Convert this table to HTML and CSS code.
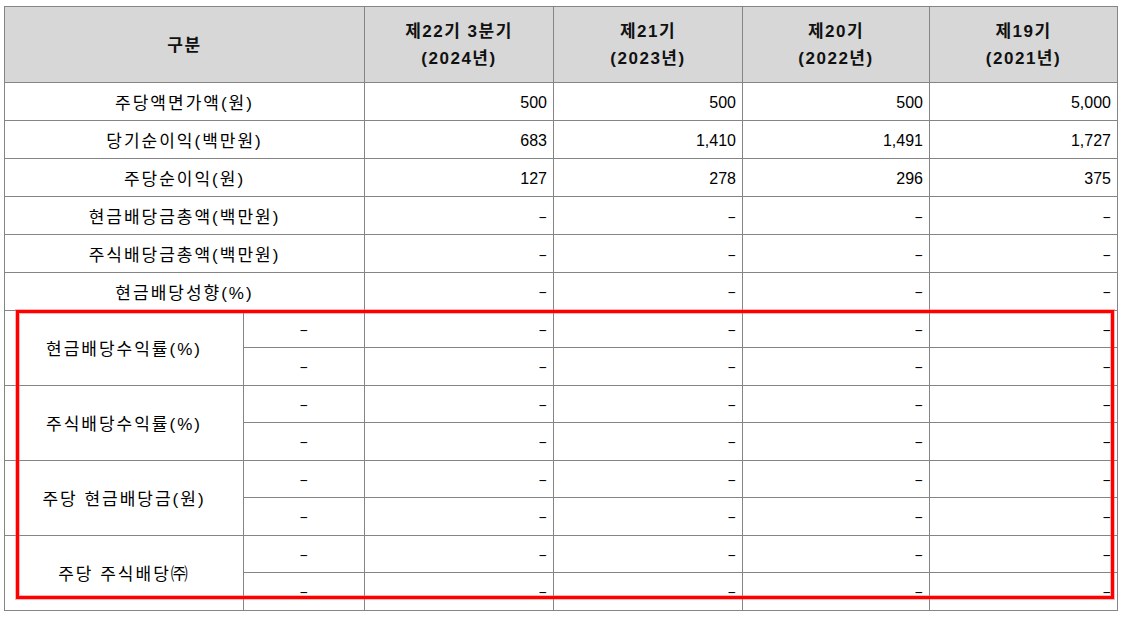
FILE: index.html
```html
<!DOCTYPE html>
<html lang="ko">
<head>
<meta charset="utf-8">
<title>배당 정보</title>
<link rel="stylesheet" href="styles.css">
</head>
<body>
<div class="wrap">
  <table class="div-table">
    <colgroup>
      <col class="c-lab">
      <col class="c-sub">
      <col class="c-y1">
      <col class="c-y2">
      <col class="c-y3">
      <col class="c-y4">
    </colgroup>
    <thead>
      <tr class="head">
        <th colspan="2">구분</th>
        <th>제22기 3분기<br>(2024년)</th>
        <th>제21기<br>(2023년)</th>
        <th>제20기<br>(2022년)</th>
        <th>제19기<br>(2021년)</th>
      </tr>
    </thead>
    <tbody>
      <tr class="r38"><td colspan="2" class="lab">주당액면가액(원)</td><td class="num">500</td><td class="num">500</td><td class="num">500</td><td class="num">5,000</td></tr>
      <tr class="r38"><td colspan="2" class="lab">당기순이익(백만원)</td><td class="num">683</td><td class="num">1,410</td><td class="num">1,491</td><td class="num">1,727</td></tr>
      <tr class="r38"><td colspan="2" class="lab">주당순이익(원)</td><td class="num">127</td><td class="num">278</td><td class="num">296</td><td class="num">375</td></tr>
      <tr class="r38"><td colspan="2" class="lab">현금배당금총액(백만원)</td><td class="num"><span class="dash">-</span></td><td class="num"><span class="dash">-</span></td><td class="num"><span class="dash">-</span></td><td class="num"><span class="dash">-</span></td></tr>
      <tr class="r38"><td colspan="2" class="lab">주식배당금총액(백만원)</td><td class="num"><span class="dash">-</span></td><td class="num"><span class="dash">-</span></td><td class="num"><span class="dash">-</span></td><td class="num"><span class="dash">-</span></td></tr>
      <tr class="r37"><td colspan="2" class="lab">현금배당성향(%)</td><td class="num"><span class="dash">-</span></td><td class="num"><span class="dash">-</span></td><td class="num"><span class="dash">-</span></td><td class="num"><span class="dash">-</span></td></tr>

      <tr class="r37"><td rowspan="2" class="lab">현금배당수익률(%)</td><td class="mid"><span class="dash">-</span></td><td class="num"><span class="dash">-</span></td><td class="num"><span class="dash">-</span></td><td class="num"><span class="dash">-</span></td><td class="num"><span class="dash">-</span></td></tr>
      <tr class="r37"><td class="mid"><span class="dash">-</span></td><td class="num"><span class="dash">-</span></td><td class="num"><span class="dash">-</span></td><td class="num"><span class="dash">-</span></td><td class="num"><span class="dash">-</span></td></tr>

      <tr class="r37"><td rowspan="2" class="lab">주식배당수익률(%)</td><td class="mid"><span class="dash">-</span></td><td class="num"><span class="dash">-</span></td><td class="num"><span class="dash">-</span></td><td class="num"><span class="dash">-</span></td><td class="num"><span class="dash">-</span></td></tr>
      <tr class="r37"><td class="mid"><span class="dash">-</span></td><td class="num"><span class="dash">-</span></td><td class="num"><span class="dash">-</span></td><td class="num"><span class="dash">-</span></td><td class="num"><span class="dash">-</span></td></tr>

      <tr class="r37"><td rowspan="2" class="lab">주당 현금배당금(원)</td><td class="mid"><span class="dash">-</span></td><td class="num"><span class="dash">-</span></td><td class="num"><span class="dash">-</span></td><td class="num"><span class="dash">-</span></td><td class="num"><span class="dash">-</span></td></tr>
      <tr class="r37"><td class="mid"><span class="dash">-</span></td><td class="num"><span class="dash">-</span></td><td class="num"><span class="dash">-</span></td><td class="num"><span class="dash">-</span></td><td class="num"><span class="dash">-</span></td></tr>

      <tr class="r37"><td rowspan="2" class="lab lab-low">주당 주식배당㈜</td><td class="mid"><span class="dash">-</span></td><td class="num"><span class="dash">-</span></td><td class="num"><span class="dash">-</span></td><td class="num"><span class="dash">-</span></td><td class="num"><span class="dash">-</span></td></tr>
      <tr class="r37"><td class="mid"><span class="dash">-</span></td><td class="num"><span class="dash">-</span></td><td class="num"><span class="dash">-</span></td><td class="num"><span class="dash">-</span></td><td class="num"><span class="dash">-</span></td></tr>
    </tbody>
  </table>
  <div class="highlight"></div>
</div>
</body>
</html>
```

FILE: styles.css
```css
html, body {
  margin: 0;
  padding: 0;
  background: #ffffff;
}

body {
  font-family: "Liberation Sans", "Noto Sans CJK KR", sans-serif;
  font-size: 16px;
  color: #000000;
}

.wrap {
  position: relative;
  padding: 6px 0 0 4px;
  width: 1114px;
}

.div-table {
  border-collapse: collapse;
  table-layout: fixed;
  width: 1114px;
  border: 1px solid #000000;
}

.c-lab { width: 239px; }
.c-sub { width: 121px; }
.c-y1 { width: 189px; }
.c-y2 { width: 189px; }
.c-y3 { width: 187px; }
.c-y4 { width: 188px; }

.div-table th,
.div-table td {
  border: 1px solid #858585;
  padding: 0;
  overflow: hidden;
  white-space: nowrap;
}

.head th {
  height: 74px;
  background: #d7d7d7;
  font-size: 17px;
  font-weight: 700;
  color: #111111;
  letter-spacing: 1.5px;
  line-height: 27px;
  text-align: center;
  vertical-align: middle;
  padding-top: 1px;
}

.r38 { height: 38px; }
.r37 { height: 37.5px; }

.lab {
  text-align: center;
  font-size: 17px;
  letter-spacing: 2px;
  padding-right: 10px;
}

.lab-low {
  padding-top: 6px;
}

.num {
  text-align: right;
  padding-right: 6px !important;
  padding-top: 2px !important;
}

.mid {
  text-align: center;
  padding-top: 2px !important;
}

.dash {
  display: inline-block;
  transform: scaleX(1.7) scaleY(0.8);
  transform-origin: center;
  margin: 0 1px;
}

.num .dash {
  transform-origin: right center;
  margin: 0;
}

.highlight {
  position: absolute;
  left: 16px;
  top: 310px;
  width: 1098px;
  height: 289px;
  box-sizing: border-box;
  border: 3px solid #ff0000;
  box-shadow: 0 0 0 1px rgba(255, 90, 90, 0.45), inset 0 0 0 1px rgba(255, 90, 90, 0.45);
  pointer-events: none;
}
```
